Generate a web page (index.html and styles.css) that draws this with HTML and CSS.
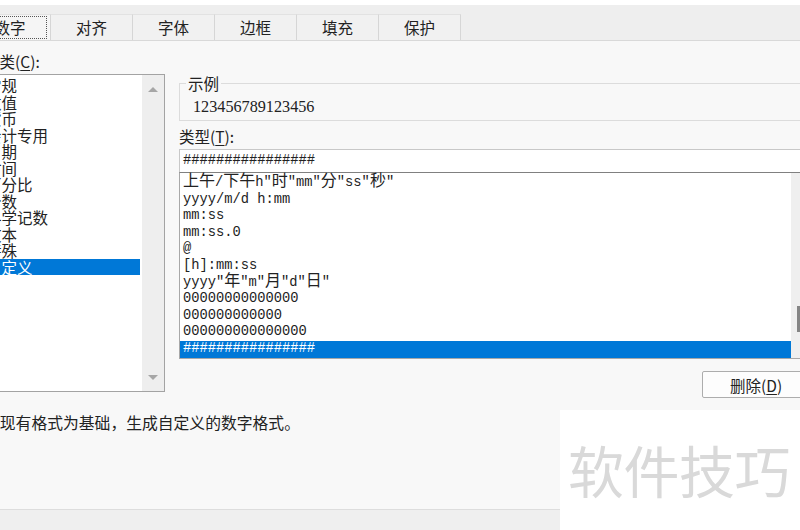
FILE: index.html
```html
<!DOCTYPE html>
<html lang="zh-CN">
<head>
<meta charset="utf-8">
<title>设置单元格格式</title>
<link rel="stylesheet" href="styles.css">
</head>
<body>
<div class="topstrip"></div>
<div class="tabbar">
  <div class="tab sel"><span class="focus">数字</span></div>
  <div class="tab">对齐</div>
  <div class="tab">字体</div>
  <div class="tab">边框</div>
  <div class="tab">填充</div>
  <div class="tab">保护</div>
</div>
<div class="dlg">
  <div class="main">
    <div class="left">
      <div class="lbl">分类(<u>C</u>):</div>
      <div class="catbox">
        <div class="items">
          <div class="row">常规</div>
          <div class="row">数值</div>
          <div class="row">货币</div>
          <div class="row">会计专用</div>
          <div class="row">日期</div>
          <div class="row">时间</div>
          <div class="row">百分比</div>
          <div class="row">分数</div>
          <div class="row">科学记数</div>
          <div class="row">文本</div>
          <div class="row">特殊</div>
          <div class="row sel">自定义</div>
        </div>
        <div class="vsb"><span class="arr up"></span><span class="arr down"></span></div>
      </div>
    </div>
    <div class="right">
      <fieldset class="sample">
        <legend>示例</legend>
        <div class="sval">123456789123456</div>
      </fieldset>
      <div class="lbl2">类型(<u>T</u>):</div>
      <div class="input">################</div>
      <div class="fmtbox">
        <div class="fitems">
          <div class="frow"><span class="w">上午</span>/<span class="w">下午</span>h"<span class="w">时</span>"mm"<span class="w">分</span>"ss"<span class="w">秒</span>"</div>
          <div class="frow">yyyy/m/d h:mm</div>
          <div class="frow">mm:ss</div>
          <div class="frow">mm:ss.0</div>
          <div class="frow">@</div>
          <div class="frow">[h]:mm:ss</div>
          <div class="frow">yyyy"<span class="w">年</span>"m"<span class="w">月</span>"d"<span class="w">日</span>"</div>
          <div class="frow">00000000000000</div>
          <div class="frow">000000000000</div>
          <div class="frow">000000000000000</div>
          <div class="frow sel">################</div>
        </div>
        <div class="vsb2"><span class="thumb"></span></div>
      </div>
      <div class="btnrow"><button class="btn">删除(<u>D</u>)</button></div>
    </div>
  </div>
  <div class="desc">以现有格式为基础，生成自定义的数字格式。</div>
</div>
<div class="footer"></div>
<div class="wm">软件技巧</div>
</body>
</html>
```
FILE: styles.css
```css
* { box-sizing: border-box; }
html, body { margin: 0; padding: 0; }
body {
  width: 800px;
  height: 530px;
  overflow: hidden;
  position: relative;
  display: flex;
  flex-direction: column;
  background: #f8f8f8;
  color: #222;
  font-family: "Noto Sans CJK SC", sans-serif;
  font-size: 15.5px;
}
u { text-decoration: underline; text-underline-offset: 2px; }

.topstrip { height: 5px; background: #ffffff; flex: none; }

.tabbar {
  flex: none;
  height: 36px;
  background: #eeeeee;
  border-bottom: 1px solid #d9d9d9;
  display: flex;
  align-items: flex-end;
}
.tab {
  width: 82px;
  height: 26px;
  flex: none;
  border-top: 1px solid #e2e2e2;
  border-right: 1px solid #d6d6d6;
  background: #f1f1f1;
  text-align: center;
  line-height: 24px;
  font-size: 15.5px;
}
.tab.sel {
  margin-left: -31px;
  background: #f5f5f5;
  padding: 1px 3px 0 4px;
}
.tab.sel .focus {
  display: block;
  height: 23px;
  line-height: 21px;
  border: 1px dotted #555;
}

.dlg {
  flex: 1;
  margin-left: -17px;
  display: flex;
  flex-direction: column;
}
.main { display: flex; gap: 14px; align-items: flex-start; }

.left { width: 182px; flex: none; }
.lbl {
  margin-top: 11px;
  padding-left: 1px;
  line-height: 18px;
  font-size: 15.5px;
}
.catbox {
  margin-top: 4px;
  height: 318px;
  border: 1px solid #a3a3a3;
  background: #fff;
  display: flex;
}
.items { flex: 1; padding: 2px 2px 0 0; }
.row {
  height: 16.5px;
  line-height: 16.5px;
  padding-left: 2px;
  font-size: 15.5px;
  white-space: nowrap;
}
.row.sel { background: #0078d7; color: #fff; }
.vsb {
  width: 22px;
  flex: none;
  background: #eeeeee;
  display: flex;
  flex-direction: column;
  justify-content: space-between;
  align-items: center;
  padding: 12px 0 11px;
}
.arr { width: 0; height: 0; border-left: 5px solid transparent; border-right: 5px solid transparent; }
.arr.up { border-bottom: 5px solid #a6a6a6; }
.arr.down { border-top: 5px solid #a6a6a6; }

.right { width: 630px; flex: none; }
.sample {
  margin: 33px 0 0;
  padding: 0 0 4px 6px;
  border: 1px solid #dcdcdc;
  min-width: 0;
}
.sample legend {
  padding: 0 2px;
  line-height: 18px;
  font-size: 15.5px;
}
.sval {
  padding: 6px 0 0 7px;
  line-height: 18px;
  font-family: "Liberation Serif", serif;
  font-size: 16.2px;
}
.lbl2 { margin-top: 6px; line-height: 18px; }
.input {
  margin-top: 4px;
  height: 23px;
  border: 1px solid #c8c8c8;
  border-bottom: none;
  background: #fff;
  padding-left: 3px;
  line-height: 22px;
  font-family: "Liberation Mono", monospace;
  font-size: 13.75px;
}
.fmtbox {
  height: 187px;
  border: 1px solid #a8a8a8;
  border-top-color: #808080;
  background: #fff;
  display: flex;
}
.fitems { flex: 1; padding-top: 2px; }
.frow {
  height: 16.6px;
  line-height: 16.6px;
  padding-left: 3px;
  font-family: "Liberation Mono", "Noto Sans CJK SC", monospace;
  font-size: 13.75px;
  white-space: nowrap;
}
.frow .w {
  font-family: "Noto Sans CJK SC", sans-serif;
  font-size: 16px;
  line-height: 0;
}
.frow.sel { background: #0078d7; color: #fff; }
.vsb2 {
  width: 17px;
  flex: none;
  background: #efefef;
  display: flex;
  justify-content: center;
  padding-top: 133px;
}
.thumb { width: 6px; height: 26px; background: #858585; }

.btnrow { display: flex; justify-content: flex-end; margin-top: 12px; }
.btn {
  width: 107px;
  height: 27px;
  border: 1px solid #adadad;
  border-radius: 2px;
  background: #fdfdfd;
  font-family: "Noto Sans CJK SC", sans-serif;
  font-size: 15.5px;
  color: #222;
  text-align: left;
  padding: 0 0 0 27px;
}

.desc {
  margin-top: 16px;
  padding-left: 1px;
  line-height: 18px;
  font-size: 15.8px;
  white-space: nowrap;
}

.footer {
  flex: none;
  height: 21px;
  border-top: 1px solid #dddddd;
  background: #efefef;
}

.wm {
  position: absolute;
  left: 560px;
  top: 410px;
  width: 240px;
  height: 120px;
  background: #ffffff;
  color: #d9d9d9;
  font-size: 56px;
  line-height: 118px;
  padding-left: 8px;
  white-space: nowrap;
  letter-spacing: -0.5px;
}
```
